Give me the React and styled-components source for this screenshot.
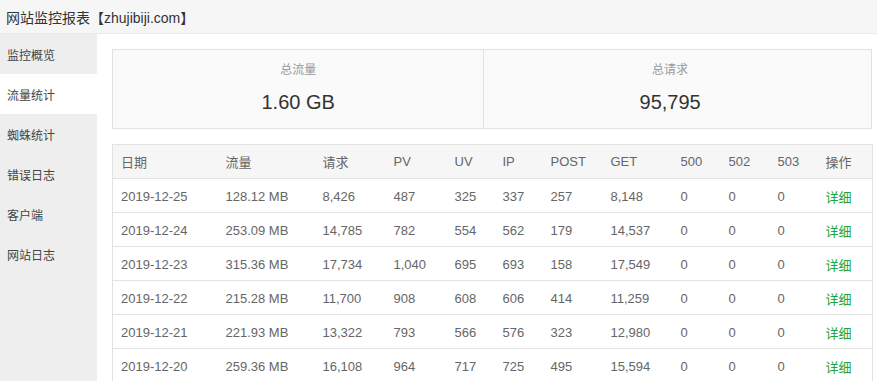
import React from "react";
import styled, { createGlobalStyle } from "styled-components";

const Global = createGlobalStyle`
  html, body { margin: 0; padding: 0; background: #fff; }
  body { font-family: "Liberation Sans", "Noto Sans CJK SC", sans-serif; }
`;

const Page = styled.div`
  display: flex;
  flex-direction: column;
  width: 877px;
  height: 381px;
  overflow: hidden;
`;

const TitleBar = styled.div`
  height: 33px;
  flex: none;
  display: flex;
  align-items: center;
  padding-left: 6px;
  background: #f6f6f6;
  border-bottom: 1px solid #ebebeb;
  font-size: 14px;
  color: #333;
`;

const Body = styled.div`
  flex: 1;
  display: flex;
  min-height: 0;
`;

const Sidebar = styled.nav`
  width: 97px;
  flex: none;
  background: #eeeeee;
  display: flex;
  flex-direction: column;
`;

const NavItem = styled.div`
  height: 40px;
  display: flex;
  align-items: center;
  padding-left: 7px;
  font-size: 12px;
  color: #444;
  background: ${(p) => (p.$active ? "#fff" : "transparent")};
`;

const Main = styled.main`
  flex: 1;
  padding: 15px 5px 0 15px;
  display: flex;
  flex-direction: column;
  gap: 15px;
  min-width: 0;
`;

const Summary = styled.div`
  height: 80px;
  flex: none;
  box-sizing: border-box;
  border: 1px solid #e2e2e2;
  background: #fafafa;
  display: grid;
  grid-template-columns: 49% 49%;
`;

const Stat = styled.div`
  display: flex;
  flex-direction: column;
  align-items: center;
  padding-top: 10px;
  gap: 7px;
  border-right: ${(p) => (p.$divider ? "1px solid #e2e2e2" : "none")};
`;

const StatLabel = styled.div`
  font-size: 12px;
  line-height: 20px;
  color: #999;
`;

const StatValue = styled.div`
  font-size: 20px;
  line-height: 30px;
  color: #333;
`;

const Table = styled.table`
  width: 100%;
  flex: none;
  table-layout: fixed;
  border-collapse: collapse;
  border: 1px solid #e2e2e2;
  font-size: 13px;
  color: #666;
`;

const HeadRow = styled.tr`
  background: #f6f6f6;
`;

const Th = styled.th`
  height: 33px;
  padding: 0 0 0 8px;
  text-align: left;
  font-weight: normal;
  border-bottom: 1px solid #e2e2e2;
`;

const Td = styled.td`
  height: 32px;
  padding: 1px 0 0 8px;
  border-bottom: 1px solid #e2e2e2;
  white-space: nowrap;
`;

const Link = styled.span`
  color: #20a53a;
`;

const cols = [105, 97, 71, 61, 48, 48, 60, 70, 48, 49, 48, 55];
const heads = ["日期", "流量", "请求", "PV", "UV", "IP", "POST", "GET", "500", "502", "503", "操作"];
const rows = [
  ["2019-12-25", "128.12 MB", "8,426", "487", "325", "337", "257", "8,148"],
  ["2019-12-24", "253.09 MB", "14,785", "782", "554", "562", "179", "14,537"],
  ["2019-12-23", "315.36 MB", "17,734", "1,040", "695", "693", "158", "17,549"],
  ["2019-12-22", "215.28 MB", "11,700", "908", "608", "606", "414", "11,259"],
  ["2019-12-21", "221.93 MB", "13,322", "793", "566", "576", "323", "12,980"],
  ["2019-12-20", "259.36 MB", "16,108", "964", "717", "725", "495", "15,594"],
];
const nav = ["监控概览", "流量统计", "蜘蛛统计", "错误日志", "客户端", "网站日志"];

export default function App() {
  return (
    <>
      <Global />
      <Page>
        <TitleBar>网站监控报表【zhujibiji.com】</TitleBar>
        <Body>
          <Sidebar>
            {nav.map((n, i) => (
              <NavItem key={n} $active={i === 1}>{n}</NavItem>
            ))}
          </Sidebar>
          <Main>
            <Summary>
              <Stat $divider>
                <StatLabel>总流量</StatLabel>
                <StatValue>1.60 GB</StatValue>
              </Stat>
              <Stat>
                <StatLabel>总请求</StatLabel>
                <StatValue>95,795</StatValue>
              </Stat>
            </Summary>
            <Table>
              <colgroup>
                {cols.map((w, i) => (
                  <col key={i} style={{ width: w }} />
                ))}
              </colgroup>
              <thead>
                <HeadRow>
                  {heads.map((h) => (
                    <Th key={h}>{h}</Th>
                  ))}
                </HeadRow>
              </thead>
              <tbody>
                {rows.map((r) => (
                  <tr key={r[0]}>
                    {r.map((c, i) => (
                      <Td key={i}>{c}</Td>
                    ))}
                    <Td>0</Td>
                    <Td>0</Td>
                    <Td>0</Td>
                    <Td><Link>详细</Link></Td>
                  </tr>
                ))}
              </tbody>
            </Table>
          </Main>
        </Body>
      </Page>
    </>
  );
}
